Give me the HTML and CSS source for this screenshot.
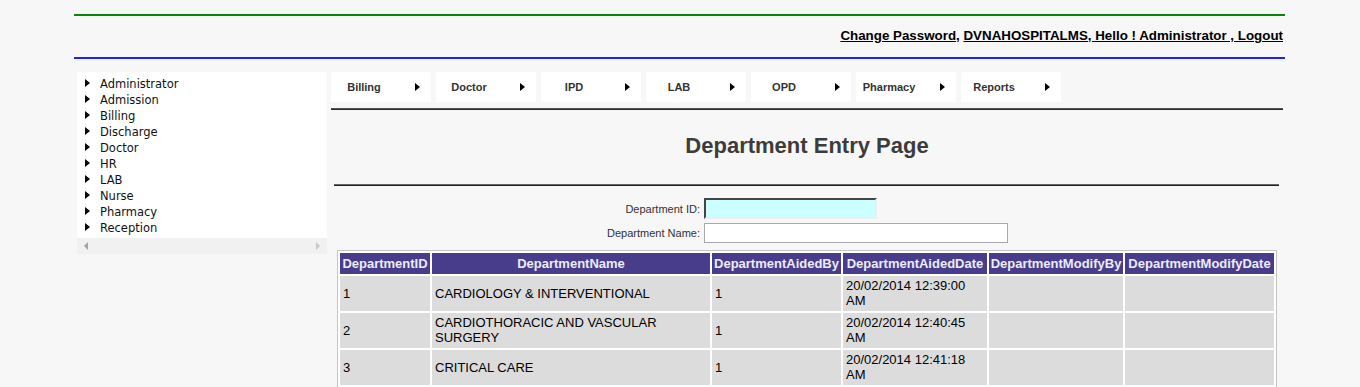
FILE: index.html
```html
<!DOCTYPE html>
<html>
<head>
<meta charset="utf-8">
<title>Department Entry Page</title>
<link rel="stylesheet" href="styles.css">
</head>
<body>
<div class="wrap">
  <div class="line-green"></div>
  <div class="topbar">
    <a href="#">Change Password</a>, <a href="#">DVNAHOSPITALMS, Hello ! Administrator , Logout</a>
  </div>
  <div class="line-blue"></div>
  <div class="main">
    <div class="side">
      <ul class="tree">
        <li><span class="tri"></span>Administrator</li>
        <li><span class="tri"></span>Admission</li>
        <li><span class="tri"></span>Billing</li>
        <li><span class="tri"></span>Discharge</li>
        <li><span class="tri"></span>Doctor</li>
        <li><span class="tri"></span>HR</li>
        <li><span class="tri"></span>LAB</li>
        <li><span class="tri"></span>Nurse</li>
        <li><span class="tri"></span>Pharmacy</li>
        <li><span class="tri"></span>Reception</li>
      </ul>
      <div class="hscroll"><span class="arr-l"></span><span class="arr-r"></span></div>
    </div>
    <div class="content">
      <div class="menu">
        <div class="mitem"><span class="mtxt">Billing</span><span class="mtri"></span></div>
        <div class="mitem"><span class="mtxt">Doctor</span><span class="mtri"></span></div>
        <div class="mitem"><span class="mtxt">IPD</span><span class="mtri"></span></div>
        <div class="mitem"><span class="mtxt">LAB</span><span class="mtri"></span></div>
        <div class="mitem"><span class="mtxt">OPD</span><span class="mtri"></span></div>
        <div class="mitem"><span class="mtxt">Pharmacy</span><span class="mtri"></span></div>
        <div class="mitem"><span class="mtxt">Reports</span><span class="mtri"></span></div>
      </div>
      <div class="rule"></div>
      <h1 class="title">Department Entry Page</h1>
      <div class="rule rule-inset"></div>
      <div class="form">
        <label class="lbl">Department ID:</label>
        <input class="in-id" type="text">
        <label class="lbl">Department Name:</label>
        <input class="in-name" type="text">
      </div>
      <table class="grid">
        <thead>
          <tr>
            <th class="c1">DepartmentID</th>
            <th class="c2">DepartmentName</th>
            <th class="c3">DepartmentAidedBy</th>
            <th class="c4">DepartmentAidedDate</th>
            <th class="c5">DepartmentModifyBy</th>
            <th class="c6">DepartmentModifyDate</th>
          </tr>
        </thead>
        <tbody>
          <tr><td>1</td><td>CARDIOLOGY &amp; INTERVENTIONAL</td><td>1</td><td>20/02/2014 12:39:00 AM</td><td></td><td></td></tr>
          <tr><td>2</td><td>CARDIOTHORACIC AND VASCULAR SURGERY</td><td>1</td><td>20/02/2014 12:40:45 AM</td><td></td><td></td></tr>
          <tr><td>3</td><td>CRITICAL CARE</td><td>1</td><td>20/02/2014 12:41:18 AM</td><td></td><td></td></tr>
          <tr><td>4</td><td>DENTAL</td><td>1</td><td>20/02/2014 12:41:50 AM</td><td></td><td></td></tr>
        </tbody>
      </table>
    </div>
  </div>
</div>
</body>
</html>
```
FILE: styles.css
```css
html, body {
  margin: 0;
  padding: 0;
  background: #f7f7f7;
  font-family: "Liberation Sans", Arial, sans-serif;
}
.wrap {
  width: 1211px;
  margin-left: 74px;
  padding-top: 14px;
}
.line-green {
  height: 1px;
  border-top: 1px solid #0a8a0a;
  background: #1a7a1a;
}
.topbar {
  padding: 12px 2px 13px 0;
  line-height: 16px;
  height: 16px;
  text-align: right;
  font-size: 13.35px;
  font-weight: bold;
  color: #000;
}
.topbar a {
  color: #000;
  text-decoration: underline;
}
.line-blue {
  height: 2px;
  background: #1f1fff;
}
.main {
  display: flex;
  margin-top: 13px;
  gap: 4px;
  align-items: flex-start;
}
.side {
  width: 250px;
  margin-left: 3px;
  flex: none;
}
.tree {
  list-style: none;
  margin: 0;
  padding: 4px 0 2px 8px;
  background: #fff;
  font-family: "DejaVu Sans", Verdana, sans-serif;
  font-size: 11.5px;
  color: #111;
}
.tree li {
  display: flex;
  align-items: center;
  height: 16px;
  line-height: 16px;
  gap: 10px;
}
.tri {
  width: 0;
  height: 0;
  border-top: 4.5px solid transparent;
  border-bottom: 4.5px solid transparent;
  border-left: 5px solid #000;
  margin-top: -2px;
}
.hscroll {
  height: 16px;
  background: #f1f1f1;
  display: flex;
  justify-content: space-between;
  align-items: center;
  padding: 0 7px;
}
.arr-l, .arr-r {
  width: 0;
  height: 0;
  border-top: 4px solid transparent;
  border-bottom: 4px solid transparent;
}
.arr-l { border-right: 4px solid #a3a3a3; }
.arr-r { border-left: 4px solid #c8c8c8; }
.content {
  width: 952px;
  flex: none;
}
.menu {
  display: flex;
  gap: 5px;
}
.mitem {
  width: 100px;
  height: 30px;
  background: #fff;
  display: flex;
  align-items: center;
  box-sizing: border-box;
  font-size: 11px;
  font-weight: bold;
  color: #333;
}
.mtxt {
  width: 66px;
  text-align: center;
  white-space: nowrap;
}
.mtri {
  margin-left: 18px;
  width: 0;
  height: 0;
  border-top: 4.5px solid transparent;
  border-bottom: 4.5px solid transparent;
  border-left: 5px solid #000;
}
.rule {
  margin-top: 6px;
  height: 0;
  border-top: 1px solid #555;
  border-bottom: 1px solid #1c1c9c;
}
.rule-inset {
  margin: 0 4px 0 3px;
  border-top: 1px solid #666;
  border-bottom: 1px solid #222;
}
.title {
  margin: 23px 0 25px 0;
  font-size: 22px;
  line-height: 26px;
  font-weight: bold;
  text-align: center;
  color: #3c3c3c;
}
.form {
  display: grid;
  grid-template-columns: 369px auto;
  column-gap: 4px;
  row-gap: 4px;
  margin-top: 12px;
  justify-content: start;
  align-items: center;
}
.lbl {
  text-align: right;
  font-size: 11px;
  color: #333;
}
.in-id {
  width: 173px;
  height: 21px;
  box-sizing: border-box;
  background: #ccffff;
  border: 2px inset #999;
  border-right-color: #eee;
  border-bottom-color: #eee;
  margin: 0;
  padding: 0;
}
.in-name {
  width: 304px;
  height: 20px;
  box-sizing: border-box;
  background: #fff;
  border: 1px solid #a9a9a9;
  margin: 0;
  padding: 0;
}
.grid {
  margin: 7px 0 0 6px;
  width: 940px;
  table-layout: fixed;
  border-collapse: separate;
  border-spacing: 2px;
  border: 1px solid #c4c4c4;
  background: #fff;
  font-size: 13px;
}
.grid th, .grid td {
  box-sizing: border-box;
  line-height: 15px;
}
.grid th {
  padding: 3px 1px;
  background: #483d8b;
  color: #ececfb;
  font-weight: bold;
  text-align: center;
  white-space: nowrap;
  overflow: hidden;
}
.grid td {
  padding: 2px 3px 3px 3px;
  background: #dcdcdc;
  color: #000;
  text-align: left;
  vertical-align: middle;
  height: 35px;
}
.c1 { width: 90px; }
.c2 { width: 278px; }
.c3 { width: 129px; }
.c4 { width: 144px; }
.c5 { width: 134px; }
.c6 { width: 149px; }
```
